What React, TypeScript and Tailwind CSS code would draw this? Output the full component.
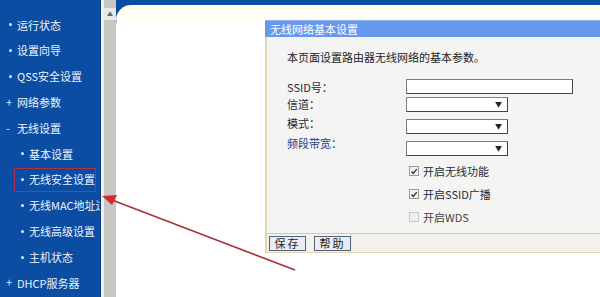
import React from 'react';

const font = { fontFamily: '"Noto Sans CJK SC", "DejaVu Sans", sans-serif' };

type NavItem = { label: string; mark: 'dot' | 'plus' | 'minus'; sub?: boolean; active?: boolean };

const nav: NavItem[] = [
  { label: '运行状态', mark: 'dot' },
  { label: '设置向导', mark: 'dot' },
  { label: 'QSS安全设置', mark: 'dot' },
  { label: '网络参数', mark: 'plus' },
  { label: '无线设置', mark: 'minus' },
  { label: '基本设置', mark: 'dot', sub: true },
  { label: '无线安全设置', mark: 'dot', sub: true, active: true },
  { label: '无线MAC地址过滤', mark: 'dot', sub: true },
  { label: '无线高级设置', mark: 'dot', sub: true },
  { label: '主机状态', mark: 'dot', sub: true },
  { label: 'DHCP服务器', mark: 'plus' },
];

const Mark = ({ mark }: { mark: NavItem['mark'] }) => {
  if (mark === 'plus') return <span className="w-[8px] text-[11px] leading-none text-[#dfe9f7]">+</span>;
  if (mark === 'minus') return <span className="w-[8px] text-[11px] leading-none text-[#dfe9f7]">-</span>;
  return <span className="w-[8px] flex justify-center"><span className="w-[3px] h-[3px] bg-[#dfe9f7] rounded-full" /></span>;
};

const Select = () => (
  <div className="w-[102px] h-[15px] bg-white border border-[#7a7f8a] border-r-[#3e4350] border-b-[#3e4350] flex items-center justify-end pr-[5px]">
    <span className="text-[7px] leading-none text-[#222]">▼</span>
  </div>
);

const Check = ({ label, checked, disabled }: { label: string; checked?: boolean; disabled?: boolean }) => (
  <div className="flex items-center gap-[4px] h-[23px]">
    <span className={`w-[10px] h-[10px] border flex items-center justify-center ${disabled ? 'border-[#c8c8c8] bg-[#efefef]' : 'border-[#9a9a9a] bg-[#f3f3f3]'}`}>
      {checked && (
        <svg viewBox="0 0 10 10" className="w-[9px] h-[9px]">
          <path d="M2 5 L4 7.5 L8.5 2" fill="none" stroke="#333" strokeWidth="1.6" />
        </svg>
      )}
    </span>
    <span className={`text-[11px] ${disabled ? 'text-[#444]' : 'text-[#1f2a40]'}`}>{label}</span>
  </div>
);

export default function App() {
  return (
    <div className="relative w-[600px] h-[297px] overflow-hidden flex bg-white" style={font}>
      {/* sidebar */}
      <div className="w-[101px] h-full bg-[#0b4da2] border-r border-[#083d85] pt-[12px] overflow-hidden shrink-0">
        {nav.map((item) => (
          <div key={item.label} className={`h-[25.8px] flex items-center ${item.sub ? 'pl-[15px]' : 'pl-[6px]'}`}>
            <div
              className={`flex items-center gap-[3px] h-[24px] whitespace-nowrap ${item.sub ? 'pl-[3px]' : ''} ${item.active ? 'border-[1.5px] border-[#b0304c] w-[82px] -ml-[1px]' : ''}`}
            >
              <Mark mark={item.mark} />
              <span className="text-[11px] text-[#eef3fb]">{item.label}</span>
            </div>
          </div>
        ))}
      </div>

      {/* scrollbar */}
      <div className="w-[15px] h-full bg-[#c9c7c4] border-l-[3px] border-[#eef1f4] shrink-0 flex flex-col">
        <div className="h-[8px]" />
        <div className="h-[12px] bg-[#e8e8e6] flex items-center justify-center">
          <span className="text-[6px] leading-none text-[#666]">▲</span>
        </div>
      </div>

      {/* main */}
      <div className="flex-1 h-full bg-[#0b4da2] flex flex-col">
        <div className="h-[5px]" />
        <div className="flex-1 bg-white rounded-tl-[20px] flex flex-col">
          <div className="h-[15px] bg-[#fffff6] rounded-tl-[20px]" />
          <div className="ml-[149px] flex flex-col">
            <div className="h-[17px] bg-[#6699ee] flex items-center pl-[5px] border-t border-[#8fb0e8]">
              <span className="text-[11px] text-white">无线网络基本设置</span>
            </div>
            <div className="h-[196px] bg-[#f4f4f2] border-l-[2px] border-[#e4d6b0] pl-[20px] pt-[12px]">
              <div className="text-[11px] text-[#222]">本页面设置路由器无线网络的基本参数。</div>
              <div className="mt-[13px] flex">
                <div className="w-[119px] flex flex-col text-[11px] text-[#1f2a40]">
                  <div className="h-[16px] flex items-center mt-[1px]">SSID号：</div>
                  <div className="h-[18px] flex items-center">信道：</div>
                  <div className="h-[20px] flex items-center">模式：</div>
                  <div className="h-[20px] flex items-center text-[#29408a]">频段带宽：</div>
                </div>
                <div className="flex flex-col gap-[3px]">
                  <div className="w-[167px] h-[15px] bg-white border border-[#7a7f8a] border-r-[#3e4350] border-b-[#3e4350]" />
                  <Select />
                  <div className="h-[1px]" />
                  <Select />
                  <div className="h-[1px]" />
                  <Select />
                  <div className="pl-[3px] mt-[1px]">
                    <Check label="开启无线功能" checked />
                    <Check label="开启SSID广播" checked />
                    <Check label="开启WDS" disabled />
                  </div>
                </div>
              </div>
            </div>
            <div className="h-[20px] bg-[#f3f1ea] border-t border-[#d9c9a0] border-l-[2px] border-l-[#e4d6b0] border-b border-b-[#e4d6b0] flex items-center gap-[8px] pl-[2px]">
              <button className="w-[37px] h-[15px] bg-[#e9ecf2] border border-[#55607a] text-[11px] leading-none text-[#222] tracking-[2px] flex items-center justify-center">保存</button>
              <button className="w-[37px] h-[15px] bg-[#e9ecf2] border border-[#55607a] text-[11px] leading-none text-[#222] tracking-[2px] flex items-center justify-center">帮助</button>
            </div>
          </div>
        </div>
      </div>

      {/* red arrow annotation */}
      <svg className="absolute inset-0 pointer-events-none" width="600" height="297" viewBox="0 0 600 297">
        <line x1="295" y1="270" x2="112" y2="200" stroke="#a8323e" strokeWidth="1.6" />
        <polygon points="102,196 117,195 112,205" fill="#d8282c" />
      </svg>
    </div>
  );
}
